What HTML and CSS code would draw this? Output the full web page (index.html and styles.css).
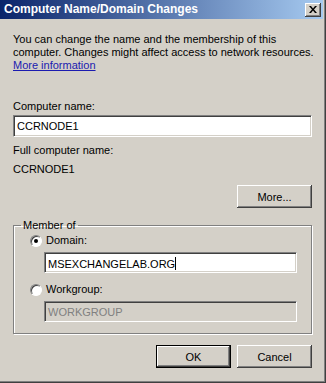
FILE: index.html
```html
<!DOCTYPE html>
<html lang="en">
<head>
    <meta charset="UTF-8">
    <link rel="stylesheet" href="styles.css">
    <title>Computer Name/Domain Changes</title>
</head>
<body>
    <div class="dialog">
        <div class="titlebar">
            <span class="title">Computer Name/Domain Changes</span>
            <button class="close">
                <svg width="8" height="7" viewBox="0 0 8 7">
                    <path d="M0 0h2l2 2.5 2-2.5h2l-3 3.5 3 3.5h-2l-2-2.5-2 2.5h-2l3-3.5z" fill="#000"/>
                </svg>
            </button>
        </div>

        <div class="content">
            <p class="intro">
                You can change the name and the membership of this<br>
                computer. Changes might affect access to network resources.<br>
                <a class="link" href="#">More information</a>
            </p>

            <div class="label first">Computer name:</div>
            <div class="field">CCRNODE1</div>

            <div class="label full">Full computer name:</div>
            <div class="value">CCRNODE1</div>

            <div class="more-row">
                <button class="btn">More...</button>
            </div>

            <fieldset class="group">
                <legend>Member of</legend>
                <div class="group-body">
                    <div class="option">
                        <span class="radio checked"></span>
                        <span>Domain:</span>
                    </div>
                    <div class="field short">MSEXCHANGELAB.ORG<span class="caret"></span></div>

                    <div class="option second">
                        <span class="radio"></span>
                        <span>Workgroup:</span>
                    </div>
                    <div class="field short disabled">WORKGROUP</div>
                </div>
            </fieldset>

            <div class="actions">
                <button class="btn default">OK</button>
                <button class="btn">Cancel</button>
            </div>
        </div>
    </div>
</body>
</html>
```

FILE: styles.css
```css
* {
    box-sizing: border-box;
    margin: 0;
    padding: 0;
}

body {
    width: 326px;
    height: 383px;
    overflow: hidden;
    font-family: "Liberation Sans", Arial, sans-serif;
    font-size: 11px;
    line-height: 13px;
    color: #000;
}

.dialog {
    width: 326px;
    height: 383px;
    background-color: #d4d0c8;
    display: flex;
    flex-direction: column;
    box-shadow: inset -1px -1px #404040, inset -2px -2px #808080;
}

/* title bar */
.titlebar {
    height: 19px;
    margin-right: 3px;
    display: flex;
    align-items: center;
    justify-content: space-between;
    padding: 0 2px 0 4px;
    background: linear-gradient(to right, #0a246a, #a6caf0);
}

.title {
    color: #fff;
    font-weight: bold;
    font-size: 12px;
}

.close {
    width: 16px;
    height: 14px;
    background-color: #d4d0c8;
    border: none;
    display: flex;
    align-items: center;
    justify-content: center;
    box-shadow: inset -1px -1px #404040, inset 1px 1px #fff, inset -2px -2px #808080;
}

/* main area */
.content {
    padding: 14px 14px 0 13px;
    display: flex;
    flex-direction: column;
}

.intro {
    white-space: nowrap;
}

.link {
    color: #1b1bb0;
}

.label.first {
    margin-top: 28px;
}

.label.full {
    margin-top: 7px;
}

.value {
    margin-top: 6px;
}

.field {
    margin-top: 2px;
    height: 22px;
    background-color: #fff;
    padding: 4px 3px 0;
    white-space: nowrap;
    border: 1px solid;
    border-color: #808080 #fff #fff #808080;
    box-shadow: inset 1px 1px #404040, inset -1px -1px #d4d0c8;
}

.field.short {
    margin-top: 5px;
    margin-left: 14px;
    height: 21px;
}

.field.disabled {
    background-color: #d4d0c8;
    color: #808080;
}

.caret {
    display: inline-block;
    width: 1px;
    height: 13px;
    background-color: #000;
    vertical-align: -2px;
}

.more-row {
    margin-top: 9px;
    display: flex;
    justify-content: flex-end;
}

.btn {
    width: 75px;
    height: 23px;
    font-family: inherit;
    font-size: 11px;
    color: #000;
    background-color: #d4d0c8;
    border: none;
    box-shadow: inset -1px -1px #404040, inset 1px 1px #fff, inset -2px -2px #808080;
}

.btn.default {
    border: 1px solid #000;
}

/* member of group */
.group {
    margin-top: 11px;
    border: 1px solid #808080;
    box-shadow: inset 1px 1px #fff, 1px 1px #fff;
    padding: 0;
}

.group legend {
    margin-left: 7px;
    padding: 0 2px;
}

.group-body {
    padding: 2px 14px 11px 16px;
    display: flex;
    flex-direction: column;
}

.option {
    display: flex;
    align-items: center;
    gap: 4px;
    height: 13px;
}

.option.second {
    margin-top: 10px;
}

.radio {
    width: 12px;
    height: 12px;
    border-radius: 50%;
    background-color: #fff;
    border: 1px solid;
    border-color: #808080 #fff #fff #808080;
    box-shadow: inset 1px 1px #404040;
    display: flex;
    align-items: center;
    justify-content: center;
}

.radio.checked::after {
    content: "";
    width: 4px;
    height: 4px;
    border-radius: 50%;
    background-color: #000;
}

.actions {
    margin-top: 11px;
    display: flex;
    justify-content: flex-end;
    gap: 6px;
}
```
